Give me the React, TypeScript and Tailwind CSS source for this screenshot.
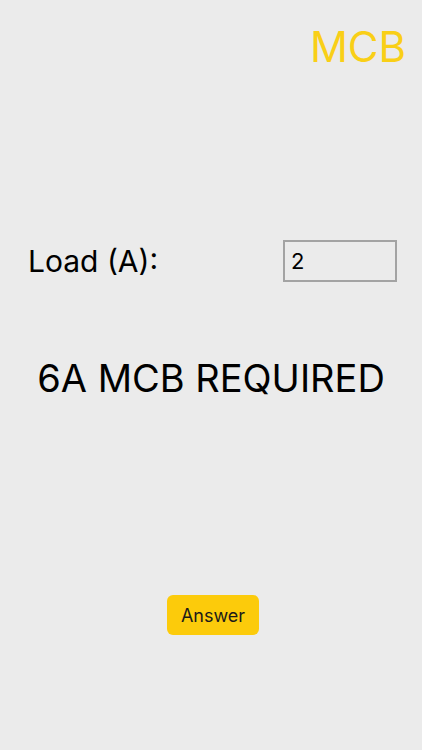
export default function App() {
  return (
    <div
      className="min-h-[750px] w-full bg-[#ebebeb] flex flex-col"
      style={{ fontFamily: "Inter, 'Noto Sans', sans-serif" }}
    >
      <header className="flex justify-end pt-[22px] pr-[16px]">
        <h1 className="text-[42px] leading-[50px] font-normal text-[#f9cf17]">MCB</h1>
      </header>

      <div className="mt-[168px] flex items-center justify-between pl-[28px] pr-[25px]">
        <label htmlFor="load" className="text-[30px] leading-[36px] text-black">
          Load (A):
        </label>
        <input
          id="load"
          defaultValue="2"
          className="w-[114px] h-[42px] border-2 border-[#a3a3a3] bg-transparent px-[6px] text-[22px] text-black outline-none"
        />
      </div>

      <p className="mt-[74px] text-center text-[38px] leading-[44px] text-black">6A MCB REQUIRED</p>

      <div className="mt-[195px] flex justify-center pl-[4px]">
        <button className="w-[92px] h-[40px] rounded-[6px] bg-[#fccb0b] text-[18px] text-[#1a1a1a]">
          Answer
        </button>
      </div>
    </div>
  );
}
